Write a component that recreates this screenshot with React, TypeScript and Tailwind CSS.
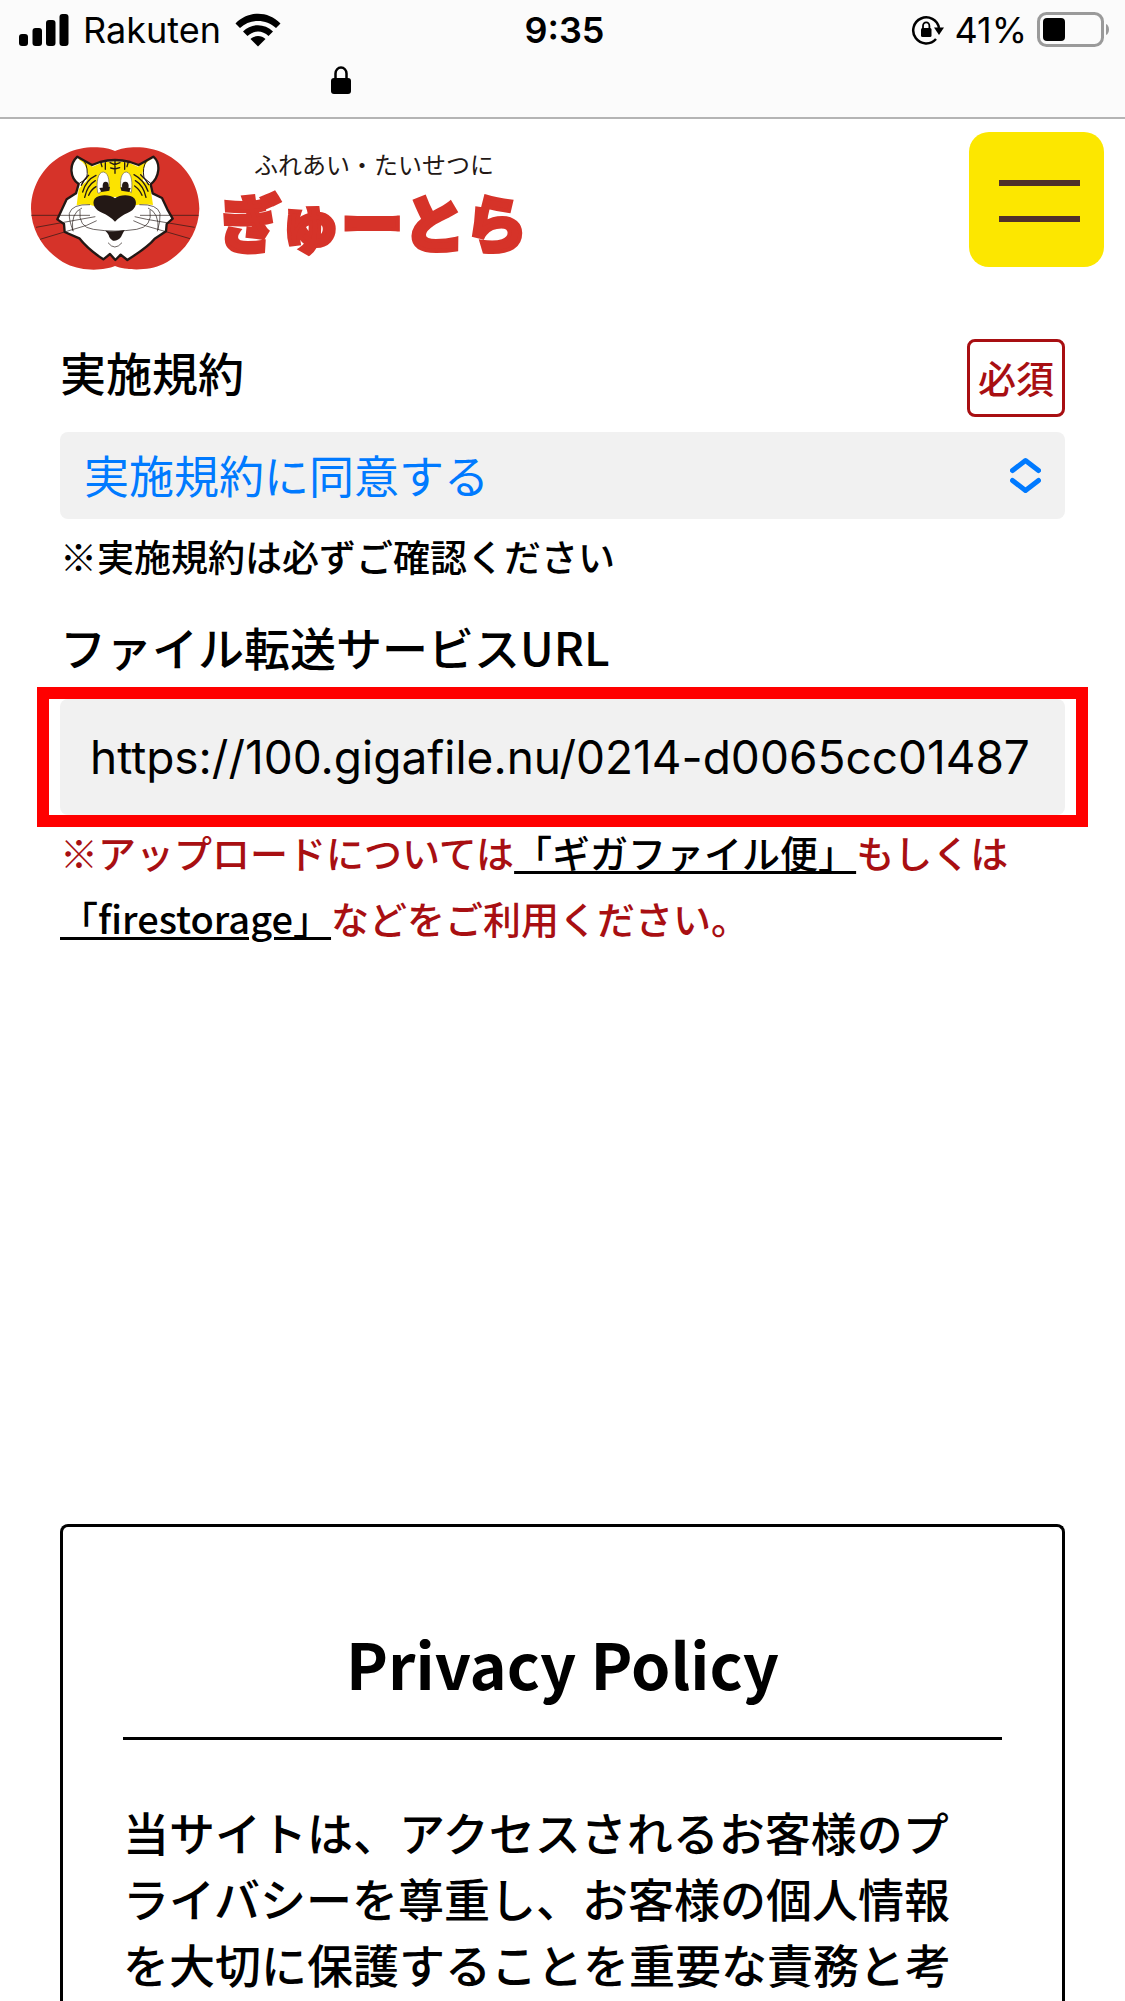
import React, { useState } from "react";

const SignalIcon = () => (
  <svg width="50" height="34" viewBox="0 0 50 34" aria-hidden="true">
    <rect x="0" y="21" width="9" height="12" rx="3" />
    <rect x="13.5" y="15" width="9.5" height="18" rx="3" />
    <rect x="27" y="7" width="9.5" height="26" rx="3" />
    <rect x="40.5" y="1" width="9" height="32" rx="3" />
  </svg>
);

const WifiIcon = () => (
  <svg width="46" height="34" viewBox="0 0 46 34" aria-hidden="true">
    <path d="M0.5 10.5C13 -2.5 33 -2.5 45.5 10.5L41 15C31 5.500 15 5.500 5 15Z" />
    <path d="M8 18.500C16.500 10 29.500 10 38 18.500L33.500 23C27.500 17 18.500 17 12.500 23Z" />
    <path d="M15.500 26C19.500 22 26.500 22 30.500 26L23 33.500Z" />
  </svg>
);

const LockIcon = () => (
  <svg width="20" height="28" viewBox="0 0 20 28" aria-hidden="true">
    <path d="M4.500 13V7.500a5.500 6 0 0 1 11 0V13" fill="none" stroke="#000" strokeWidth="2.500" />
    <rect x="0" y="12" width="20" height="16" rx="3" />
  </svg>
);

const RotationLockIcon = () => (
  <svg width="33" height="32" viewBox="0 0 33 32" aria-hidden="true">
    <path d="M25 25A13 13 0 1 1 28 14" fill="none" stroke="#000" strokeWidth="2.500" />
    <path d="M23 13.500h10l-5 7.500z" />
    <rect x="10" y="14" width="10.500" height="9" rx="1.500" />
    <path d="M12 15v-3a3.200 3.600 0 0 1 6.400 0v3" fill="none" stroke="#000" strokeWidth="1.800" />
  </svg>
);

const BatteryIcon = () => (
  <svg width="73" height="36" viewBox="0 0 73 36" aria-hidden="true">
    <rect x="1.500" y="1.500" width="64" height="32" rx="8" fill="none" stroke="#9a9a9a" strokeWidth="3" />
    <rect x="6" y="6" width="22" height="23" rx="4" />
    <path d="M69 12c4 1.500 4 9.500 0 11z" fill="#9a9a9a" />
  </svg>
);

const headOutline =
  "M172 80L216 105L240 96Q285 84 330 96L356 105L400 80C424 100 418 142 392 163L398 190L426 204L442 238L458 266L440 282L438 304L404 326C385 350 350 372 322 390L302 374L286 390L270 372L250 388C222 370 196 348 178 325L134 306L132 282L112 268L126 238L140 208L168 190L176 162C150 144 146 104 172 80Z";

const TigerLogo = () => (
  <svg width="171" height="125" viewBox="30 48 513 375" role="img" aria-label="ぎゅーとら">
    <path
      d="M285 63C258 50 190 44 140 70C78 98 34 160 33 236C34 310 80 372 140 402C190 426 255 421 285 408C318 421 385 424 430 402C490 372 536 310 538 236C537 160 492 98 432 70C380 44 315 50 285 63Z"
      fill="#d63329"
    />
    {/* head */}
    <path d={headOutline} fill="#fff" />
    <path
      d="M176 84L218 110L242 100Q285 88 330 100L354 110L396 84L382 125L368 152L390 164L399 225Q368 220 346 226L285 200L222 228Q200 218 170 226L176 178L200 150Z"
      fill="#fce300"
    />
    <ellipse cx="180" cy="125" rx="22" ry="36" transform="rotate(-18 180 125)" fill="#fff" />
    <ellipse cx="391" cy="123" rx="22" ry="36" transform="rotate(18 391 123)" fill="#fff" />
    <path d={headOutline} fill="none" stroke="#231815" strokeWidth="7" strokeLinejoin="round" />
    <path d="M192 92Q206 114 200 146L178 160M380 92Q366 112 372 144L392 160" fill="none" stroke="#231815" strokeWidth="3" />
    {/* stripes */}
    <g stroke="#231815" fill="none" strokeWidth="4" strokeLinecap="round">
      <path d="M285 92V130M270 98L284 104L300 98M272 114L285 117L299 113" />
      <path d="M242 96L246 110M256 98V118M325 96L321 110M314 98V118" />
      <path d="M228 136Q198 150 188 186M226 152Q202 166 194 202M228 170Q212 180 206 196M206 136Q190 150 184 166" />
      <path d="M342 134Q372 150 384 184M346 152Q370 166 378 202M344 168Q360 180 366 196M362 134Q378 148 386 164" />
    </g>
    {/* eyes */}
    <g stroke="#6b6257" strokeWidth="2">
      <path d="M233 188C228 155 234 126 250 126C268 128 270 164 264 178Q248 176 237 190Z" fill="#fff" />
      <path d="M304 178C298 154 304 126 319 126C336 128 338 160 334 188Q322 174 304 178Z" fill="#fff" />
    </g>
    <g fill="#231815">
      <ellipse cx="257" cy="168" rx="9" ry="13" />
      <ellipse cx="316" cy="168" rx="10" ry="13" />
      <path d="M238 174L270 170L268 182L244 186ZM302 172L332 174L328 186L304 182Z" />
      <path d="M285 205C300 194 330 192 344 206C354 222 344 240 324 248C308 254 296 264 285 275C275 264 262 254 246 248C226 240 214 222 224 206C240 192 270 194 285 205Z" />
      <path d="M256 302Q285 306 314 300Q308 310 303 321Q292 334 279 332Q268 326 266 315Q262 308 256 302Z" />
    </g>
    {/* muzzle and whiskers */}
    <g stroke="#231815" strokeWidth="2" fill="none">
      <path d="M180 240Q174 292 220 298Q285 308 350 298Q398 290 390 240" />
      <path d="M264 338Q284 364 306 338" />
      <path d="M34 256H210M48 292L192 266L226 260M60 328L200 286L230 272" />
      <path d="M536 256H360M524 292L380 268L344 260M510 326L372 286L340 272" />
      <path d="M210 224Q156 222 148 250Q146 270 160 304M186 234Q152 248 158 302" />
      <path d="M358 224Q412 222 420 250Q422 272 412 304M384 234Q418 248 414 300" />
    </g>
  </svg>
);

const StatusBar = () => (
  <div className="h-[119px] border-b-2 border-[#b4b4b4] bg-[#fbfbfb] font-['Inter',sans-serif] text-black">
    <div className="grid h-[60px] grid-cols-3 items-center pl-[19px] pr-[15px] text-[36px] leading-[60px]">
      <div className="flex items-center gap-[14px]">
        <SignalIcon />
        <span>Rakuten</span>
        <WifiIcon />
      </div>
      <div className="text-center font-semibold">9:35</div>
      <div className="flex items-center justify-end gap-[10px]">
        <RotationLockIcon />
        <span>41%</span>
        <BatteryIcon />
      </div>
    </div>
    <div className="pl-[331px] pt-[6px]">
      <LockIcon />
    </div>
  </div>
);

const SiteHeader = () => (
  <header className="flex items-start justify-between pl-[30px] pr-[21px] pt-[13px]">
    <a href="#" className="flex items-start gap-[18px] pt-[14px]">
      <TigerLogo />
      <span className="flex flex-col">
        <span className="pl-[35px] text-[24px] leading-[36px] text-[#231815]">ふれあい・たいせつに</span>
        <span className="mt-[6px] font-['Inter','Noto_Sans_CJK_JP',sans-serif] text-[62px] font-black leading-[76px] text-[#d63329] [-webkit-text-stroke:4px_#d63329]">
          ぎゅーとら
        </span>
      </span>
    </a>
    <button
      type="button"
      aria-label="メニュー"
      className="flex h-[135px] w-[135px] flex-col items-center justify-center gap-[30px] rounded-[20px] bg-[#fce700] pl-[6px] pt-[2px]"
    >
      <span className="h-[6px] w-[81px] bg-[#4f3029]" />
      <span className="h-[6px] w-[81px] bg-[#4f3029]" />
    </button>
  </header>
);

const EntryForm = () => {
  const [agree, setAgree] = useState("agree");
  const [url, setUrl] = useState("https://100.gigafile.nu/0214-d0065cc01487");

  return (
    <form onSubmit={e => e.preventDefault()}>
      <div className="flex items-start justify-between">
        <label htmlFor="terms" className="text-[46px] font-medium leading-[64px]">実施規約</label>
        <span className="flex h-[78px] items-center rounded-lg border-[3px] border-[#a80f12] px-2 pb-1 text-[38px] font-medium text-[#a80f12]">
          必須
        </span>
      </div>
      <div className="relative mt-[15px]">
        <select
          id="terms"
          className="block h-[87px] w-full appearance-none rounded-lg bg-[#f1f1f1] px-6 pb-[2px] text-[45px] leading-[66px] text-[#007aff]"
          value={agree}
          onChange={e => setAgree(e.target.value)}
        >
          <option value="agree">実施規約に同意する</option>
        </select>
        <svg
          className="pointer-events-none absolute right-6 top-[25px]"
          width="31"
          height="37"
          viewBox="0 0 31 37"
          fill="none"
          stroke="#007aff"
          strokeWidth="5"
          strokeLinecap="round"
          strokeLinejoin="round"
          aria-hidden="true"
        >
          <path d="M2.500 13.500L15.500 3.500L28.500 13.500M2.500 23.500L15.500 33.500L28.500 23.500" />
        </svg>
      </div>
      <p className="mt-1 text-[37px] font-medium leading-[66px]">※実施規約は必ずご確認ください</p>

      <label htmlFor="file-url" className="mt-6 block text-[46px] font-medium leading-[66px]">
        ファイル転送サービスURL
      </label>
      <div className="relative mt-5">
        <input
          id="file-url"
          type="text"
          className="block h-[116px] w-full rounded-lg bg-[#f1f1f1] pl-[30px] pr-4 font-['Inter',sans-serif] text-[46px]"
          value={url}
          onChange={e => setUrl(e.target.value)}
        />
        <span className="pointer-events-none absolute -inset-x-[23px] -inset-y-3 border-[12px] border-[#ff0000]" />
      </div>
      <p className="mt-1 text-[38px] font-medium leading-[66px] text-[#a80f12]">
        ※アップロードについては
        <a href="#" className="text-black underline decoration-[3px] underline-offset-[3px]">「ギガファイル便」</a>
        もしくは
        <br />
        <a href="#" className="text-black underline decoration-[3px] underline-offset-[3px]">「firestorage」</a>
        などをご利用ください。
      </p>
    </form>
  );
};

const PrivacyPolicy = () => (
  <section className="mt-[573px] grow rounded-t-lg border-[3px] border-b-0 border-black px-[60px] pt-[91px]">
    <h2 className="border-b-[3px] border-black pb-[29px] text-center text-[63px] font-bold leading-[90px]">
      Privacy Policy
    </h2>
    <p className="pr-10 pt-[58px] text-[46px] font-medium leading-[66px]">
      当サイトは、アクセスされるお客様のプライバシーを尊重し、お客様の個人情報を大切に保護することを重要な責務と考
    </p>
  </section>
);

export default function App() {
  return (
    <div lang="ja" className="flex min-h-screen flex-col bg-white font-['Noto_Sans_CJK_JP',sans-serif] text-black">
      <StatusBar />
      <SiteHeader />
      <main className="flex grow flex-col px-[60px] pt-[68px]">
        <EntryForm />
        <PrivacyPolicy />
      </main>
    </div>
  );
}
